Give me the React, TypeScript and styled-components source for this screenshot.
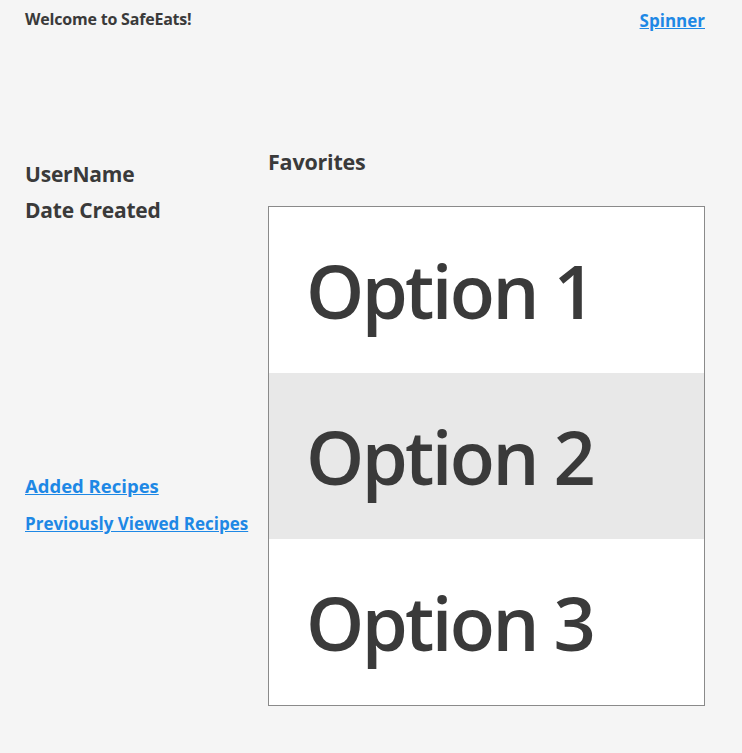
import styled, { createGlobalStyle } from "styled-components"

const GlobalStyle = createGlobalStyle`
  html, body {
    margin: 0;
    padding: 0;
    background-color: #f5f5f5;
    font-family: "Open Sans", "Noto Sans", sans-serif;
    color: #3a3a3a;
  }
`

const Page = styled.div`
  padding: 0 37px 0 25px;
  min-height: 753px;
  box-sizing: border-box;
`

const Header = styled.header`
  display: flex;
  justify-content: space-between;
  align-items: flex-start;
  height: 146px;
`

const Welcome = styled.h1`
  margin: 8px 0 0;
  font-size: 16px;
  font-weight: 700;
  letter-spacing: -0.2px;
`

const NavLink = styled.a<{ $size: number }>`
  color: #1e88e5;
  font-weight: 700;
  font-size: ${(p) => p.$size}px;
  text-decoration: underline;
  cursor: pointer;
`

const TopLink = styled(NavLink)`
  margin-top: 9px;
`

const Main = styled.main`
  display: grid;
  grid-template-columns: 243px 1fr;
`

const Profile = styled.section`
  display: flex;
  flex-direction: column;
  padding-top: 10px;
`

const InfoLine = styled.div`
  font-size: 21px;
  font-weight: 700;
  line-height: 36px;
  letter-spacing: -0.2px;
`

const Links = styled.nav`
  display: flex;
  flex-direction: column;
  gap: 14px;
  margin-top: 245px;
`

const Favorites = styled.section`
  display: flex;
  flex-direction: column;
`

const Heading = styled.h2`
  margin: 2px 0 30px;
  font-size: 21.5px;
  font-weight: 700;
  line-height: 28px;
  letter-spacing: -0.2px;
`

const List = styled.ul`
  list-style: none;
  margin: 0;
  padding: 0;
  border: 1px solid #8a8a8a;
  background: #ffffff;
`

const Option = styled.li<{ $active?: boolean }>`
  height: 166px;
  display: flex;
  align-items: center;
  padding-left: 37px;
  font-size: 74px;
  font-weight: 600;
  letter-spacing: -2.6px;
  background: ${(p) => (p.$active ? "#e8e8e8" : "#ffffff")};
`

const options = ["Option 1", "Option 2", "Option 3"]

export default function App() {
  return (
    <>
      <GlobalStyle />
      <Page>
        <Header>
          <Welcome>Welcome to SafeEats!</Welcome>
          <TopLink $size={17}>Spinner</TopLink>
        </Header>
        <Main>
          <Profile>
            <InfoLine>UserName</InfoLine>
            <InfoLine>Date Created</InfoLine>
            <Links>
              <NavLink $size={18.5}>Added Recipes</NavLink>
              <NavLink $size={17}>Previously Viewed Recipes</NavLink>
            </Links>
          </Profile>
          <Favorites>
            <Heading>Favorites</Heading>
            <List>
              {options.map((o, i) => (
                <Option key={o} $active={i === 1}>
                  {o}
                </Option>
              ))}
            </List>
          </Favorites>
        </Main>
      </Page>
    </>
  )
}
